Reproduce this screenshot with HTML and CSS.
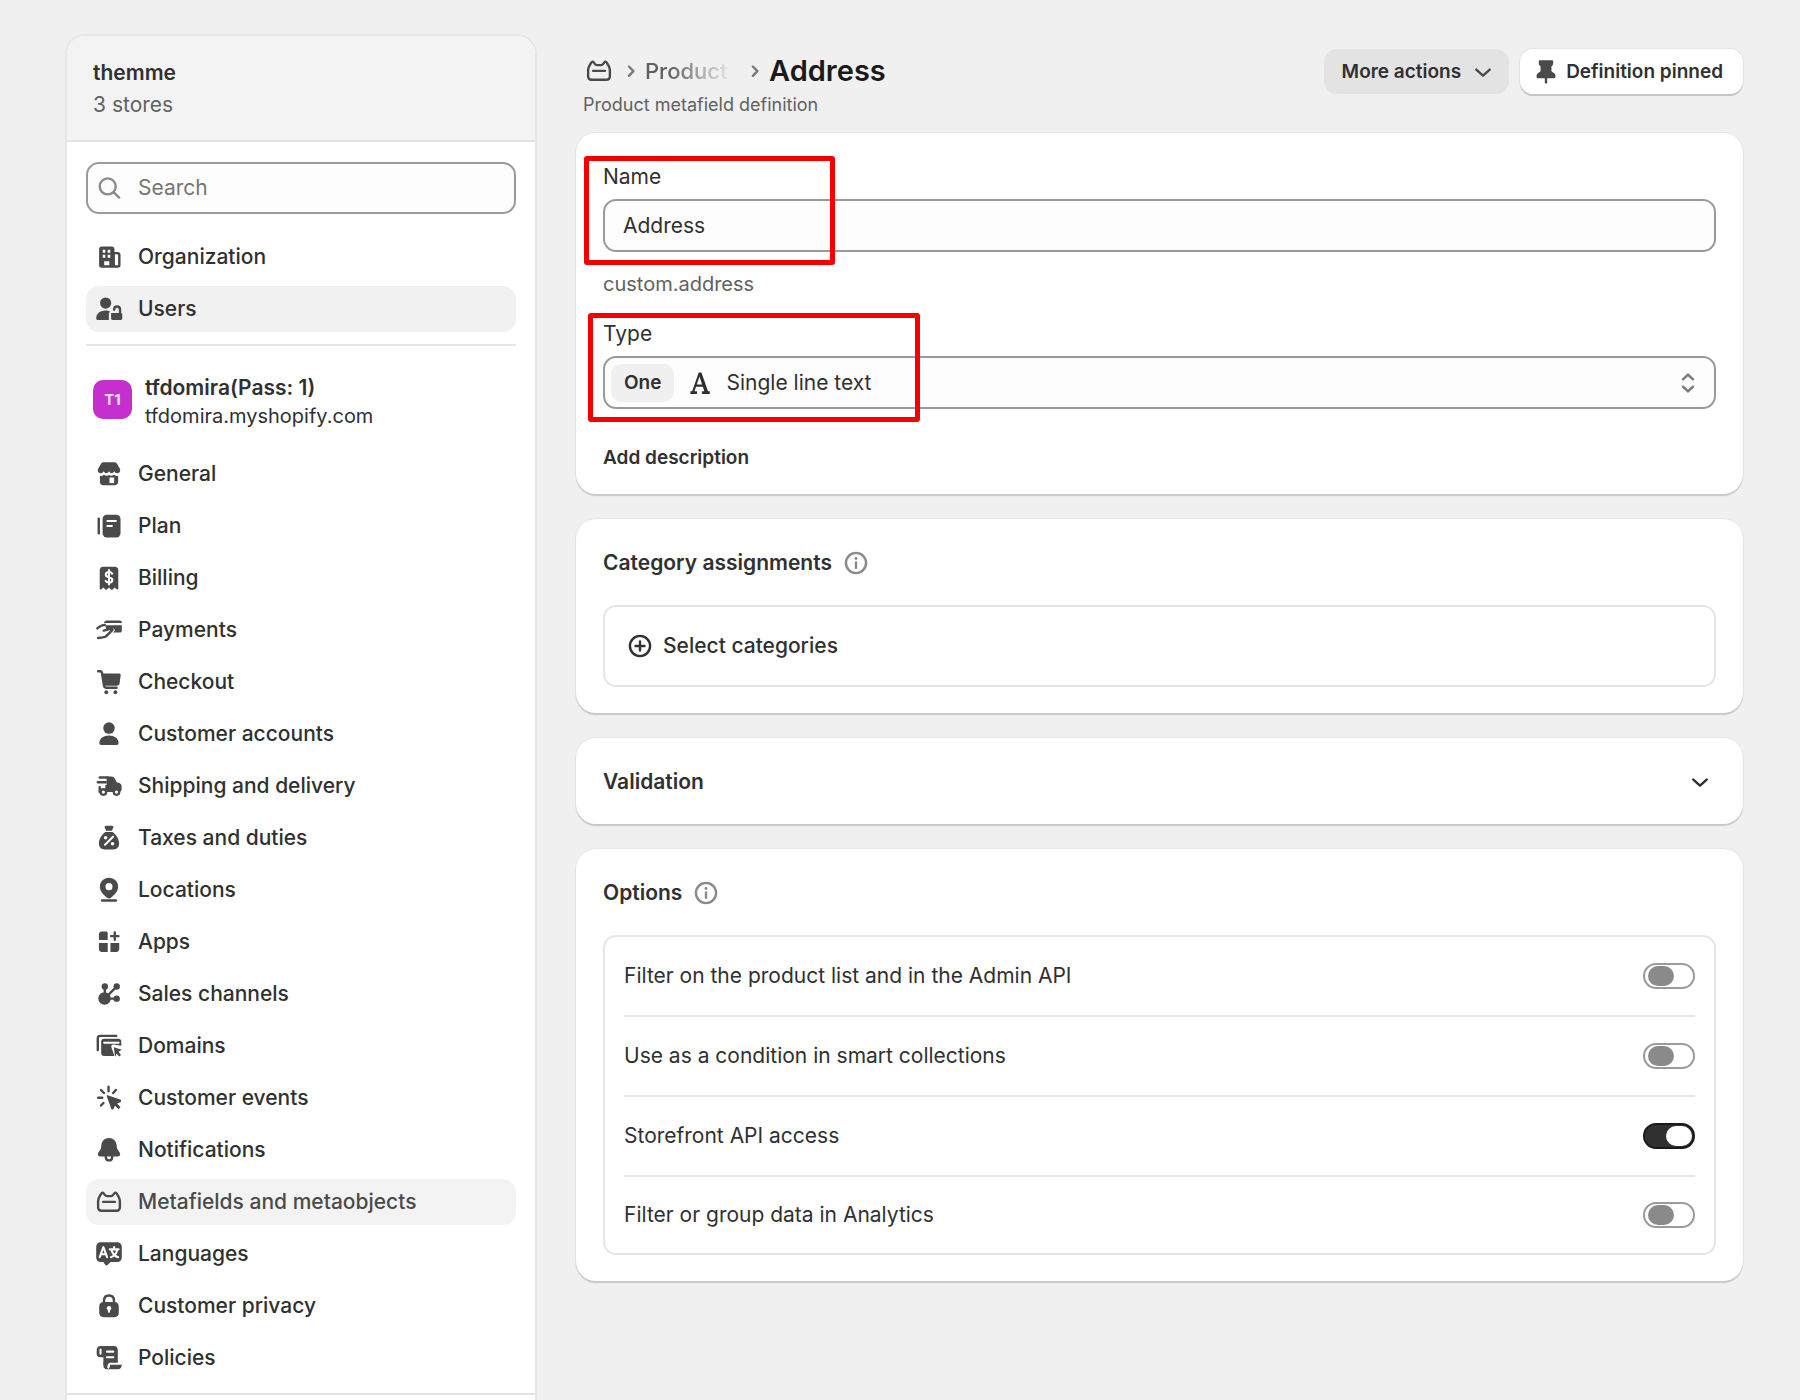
FILE: index.html
```html
<!DOCTYPE html>
<html lang="en">
<head>
    <meta charset="UTF-8">
    <meta name="viewport" content="width=device-width, initial-scale=1.0">
    <title>Address - Metafield definition</title>
    <link rel="stylesheet" href="styles.css">
</head>
<body>
    <!-- Shared icons -->
    <svg class="sprite" aria-hidden="true">
        <symbol id="icon-metafields" viewBox="0 0 20 20">
            <path class="line" d="M3.2 9.400c0-1.200.5-2.200 1.100-3.200l.9-1.500c.4-.7 1.100-.7 1.500-.1l.8 1.100c.3.400.7.600 1.200.600h2.600c.500 0 .9-.200 1.200-.600l.8-1.100c.4-.6 1.100-.6 1.500.1l.9 1.500c.6 1 1.100 2 1.100 3.200v4.100c0 1.100-.9 2-2 2h-9.600c-1.100 0-2-.9-2-2z"/>
            <path class="line" d="M6.300 9.900h7.400"/>
        </symbol>
        <symbol id="icon-info" viewBox="0 0 20 20">
            <circle class="line" cx="10" cy="10" r="6.300"/>
            <path class="line" d="M10 9.700v3.300"/>
            <circle cx="10" cy="7.200" r=".9"/>
        </symbol>
        <symbol id="icon-chevron" viewBox="0 0 20 20">
            <path class="line" d="M5.800 8.500l4.200 3.800 4.200-3.800"/>
        </symbol>
    </svg>

    <div class="layout">
        <aside class="sidebar">
            <header class="sidebar-header">
                <p class="org-name">themme</p>
                <p class="org-stores">3 stores</p>
            </header>

            <div class="sidebar-body">
                <label class="search">
                    <svg class="icon" viewBox="0 0 20 20"><circle class="line" cx="9.200" cy="9" r="5"/><path class="line" d="M13 12.700l3.300 3.300"/></svg>
                    <input type="text" placeholder="Search" aria-label="Search">
                </label>

                <nav class="nav">
                    <a class="nav-item" href="#">
                        <svg class="icon" viewBox="0 0 20 20"><path d="M5.500 3.500h6.200a1.700 1.700 0 0 1 1.700 1.700v1.600h1.800a2 2 0 0 1 2 2v6.200a1.700 1.700 0 0 1-1.700 1.700h-10a1.700 1.700 0 0 1-1.700-1.700v-9.800a1.700 1.700 0 0 1 1.700-1.700z"/><path class="cut-fill" d="M6.100 5.500h1.600v1.900h-1.600zM9.200 5.500h1.600v1.900h-1.600zM6.100 8.600h1.600v1.900h-1.600zM9.200 8.600h1.600v1.900h-1.600zM7 12.700h3.200v2.500h-3.200zM13.700 8.300h1.200a.8.8 0 0 1 .8.800v6h-2z"/></svg>
                        Organization
                    </a>
                    <a class="nav-item active" href="#">
                        <svg class="icon" viewBox="0 0 20 20"><circle cx="7.900" cy="6.300" r="3.500"/><path d="M2 16c0-3.200 2.600-5 5.900-5 1 0 2 .200 2.700.600-.5.500-.7 1.200-.7 1.900v3.400h-7c-.6 0-.9-.4-.9-.9z"/><path d="M11.300 12.500h6.100c.5 0 .9.4.9.9v2.600c0 .5-.4.9-.9.9h-5.200c-.5 0-.9-.4-.9-.9z"/><path class="line" d="M13.200 10.400c0-1.200.7-2 1.800-2s1.900.8 1.900 2v2.300"/></svg>
                        Users
                    </a>
                </nav>

                <div class="store">
                    <span class="avatar">T1</span>
                    <div>
                        <p class="store-name">tfdomira(Pass: 1)</p>
                        <p class="store-url">tfdomira.myshopify.com</p>
                    </div>
                </div>

                <nav class="nav">
                    <a class="nav-item" href="#">
                        <svg class="icon" viewBox="0 0 20 20"><path d="M6.800 2.700h6.400c.8 0 1.500.4 1.900 1l1.700 3c.7 1.500-.3 2.800-1.700 2.800-.8 0-1.400-.5-1.800-1.200-.4.700-1 1.200-1.700 1.200-.6 0-1.200-.5-1.600-1.200-.4.700-1 1.200-1.600 1.200-.7 0-1.300-.5-1.700-1.200-.4.700-1 1.200-1.800 1.200-1.400 0-2.400-1.300-1.700-2.800l1.700-3c.4-.6 1.100-1 1.900-1z"/><path d="M4.300 11.200c1 .1 1.800-.2 2.600-.8.900.8 2.200.9 3.100.2.900.7 2.200.6 3.100-.2.800.6 1.600.9 2.600.8v3.700c0 1.300-.9 2.200-2.200 2.200h-7c-1.300 0-2.200-.9-2.200-2.200z"/><path class="cut-fill" d="M10.300 12.200h2.900v3.500h-2.900z"/></svg>
                        General
                    </a>
                    <a class="nav-item" href="#">
                        <svg class="icon" viewBox="0 0 20 20"><path class="line" d="M3.600 5.500v9"/><rect x="6" y="3" width="11.200" height="14.200" rx="2.600"/><path class="cut" d="M9 6.900h5.300M9 10h2.800"/></svg>
                        Plan
                    </a>
                    <a class="nav-item" href="#">
                        <svg class="icon" viewBox="0 0 20 20"><path d="M6.200 3h7.600c1.100 0 2 .9 2 2v11.500c0 .6-.7.900-1.100.5l-1.100-1-1.400 1.200c-.3.200-.6.200-.9 0l-1.300-1.200-1.300 1.200c-.3.200-.6.200-.9 0l-1.400-1.200-1.100 1c-.4.400-1.100.1-1.100-.5v-11.500c0-1.100.9-2 2-2z"/><path class="cut" d="M12 7.300c-.3-.6-1-1-2-1-1.200 0-2 .6-2 1.600 0 2.200 4.100 1 4.100 3.300 0 1-.9 1.600-2.100 1.600-1 0-1.800-.4-2.100-1M10 5v9"/></svg>
                        Billing
                    </a>
                    <a class="nav-item" href="#">
                        <svg class="icon" viewBox="0 0 20 20"><path d="M8.500 4h8.300c.7 0 1.200.5 1.200 1.100v.6h-11.200c.3-1 .8-1.700 1.700-1.700zM7.500 7h10.500v3.400c0 .7-.5 1.200-1.200 1.200h-4.500l1-.7c.7-1-.1-2.200-1.300-1.900l-3.500.9z"/><path class="line" d="M2.700 9c1.300-1.100 2.500-2.200 4.600-2.200M6.700 10.400l4.800-1.300c.8 0 .9.800.4 1.200l-3.500 3.400c-1 1-3.400 1.200-5.200 1.300"/></svg>
                        Payments
                    </a>
                    <a class="nav-item" href="#">
                        <svg class="icon" viewBox="0 0 20 20"><path class="line" d="M3.200 3.300h1.300c.6 0 1 .4 1.100.9l1.300 8.100c.1.800.7 1.300 1.500 1.300h6.300"/><path d="M5.200 4.700h11.200c.6 0 1 .5.900 1.100l-.7 5.200c-.1.800-.8 1.400-1.600 1.400h-8.600z"/><circle cx="8.300" cy="16.400" r="1.200"/><circle cx="14" cy="16.400" r="1.200"/></svg>
                        Checkout
                    </a>
                    <a class="nav-item" href="#">
                        <svg class="icon" viewBox="0 0 20 20"><circle cx="10" cy="6.300" r="3.600"/><path d="M4 15.700c0-2.900 2.600-4.700 6-4.700s6 1.800 6 4.700c0 .8-.5 1.200-1.200 1.200h-9.600c-.7 0-1.200-.4-1.200-1.200z"/></svg>
                        Customer accounts
                    </a>
                    <a class="nav-item" href="#">
                        <svg class="icon" viewBox="0 0 20 20"><path d="M8.500 4h2.900c1 0 1.900.5 2.300 1.400l1.100 2.200 1.600.6c.9.300 1.500 1.100 1.500 2.100v1.700c0 1-.8 1.800-1.700 1.800h-11v-2.200h2.500v-2.200h.8z"/><path class="line" d="M4.200 4.700h5M3 7.700h5M4.200 10.700v3"/><path class="cut" d="M4.200 9.400h2.800"/><circle class="ring" cx="6.500" cy="13.800" r="1.700"/><circle class="ring" cx="14.700" cy="13.800" r="1.700"/></svg>
                        Shipping and delivery
                    </a>
                    <a class="nav-item" href="#">
                        <svg class="icon" viewBox="0 0 20 20"><path d="M8.200 2.300h3.600c.7 0 1.200.6.900 1.200l-.9 1.900h-3.600l-.9-1.900c-.3-.6.200-1.200.9-1.200zM7.700 6.200h4.600c2.400 1.800 4 4.500 4 7.300 0 2.300-1.300 3.700-3.600 3.700h-5.400c-2.300 0-3.600-1.400-3.600-3.700 0-2.800 1.600-5.500 4-7.300z"/><path class="cut" d="M12.500 9.200l-5 5"/><circle class="cut-fill" cx="7.900" cy="9.900" r="1.100"/><circle class="cut-fill" cx="12.200" cy="13.600" r="1.100"/></svg>
                        Taxes and duties
                    </a>
                    <a class="nav-item" href="#">
                        <svg class="icon" viewBox="0 0 20 20"><path fill-rule="evenodd" d="M10 2.400c3.100 0 5.700 2.400 5.700 5.400 0 2.900-2 5-4.500 7.100-.7.600-1.700.6-2.400 0-2.500-2.100-4.500-4.200-4.500-7.100 0-3 2.600-5.400 5.700-5.400zm0 3.300a2.200 2.200 0 1 0 0 4.400 2.200 2.200 0 0 0 0-4.400z"/><path class="line" d="M5.700 16.600h8.600"/></svg>
                        Locations
                    </a>
                    <a class="nav-item" href="#">
                        <svg class="icon" viewBox="0 0 20 20"><path d="M5.500 3.500h2.700c.6 0 1 .4 1 1v4.300h-5.500v-3.500c0-1 .8-1.800 1.800-1.800z"/><path d="M3.700 10.700h5.500v5.500h-3.700c-1 0-1.800-.8-1.800-1.800zM10.900 10.700h5.500v3.700c0 1-.8 1.800-1.800 1.800h-3.700z"/><path class="line" d="M13.600 4v4.600M11.300 6.300h4.600"/></svg>
                        Apps
                    </a>
                    <a class="nav-item" href="#">
                        <svg class="icon" viewBox="0 0 20 20"><circle cx="7.200" cy="12.800" r="3.900"/><circle cx="7.400" cy="5.300" r="2"/><circle cx="14.800" cy="5.300" r="2"/><circle cx="14.800" cy="12.900" r="2"/><path class="line" d="M7.400 5.500v5M14.600 5.500l-5 5M10 12.900h4.500"/></svg>
                        Sales channels
                    </a>
                    <a class="nav-item" href="#">
                        <svg class="icon" viewBox="0 0 20 20"><path class="line" d="M14.500 3.700h-10c-.9 0-1.500.6-1.500 1.500v7.300"/><path d="M6.800 5.500h9.200c.9 0 1.700.8 1.700 1.700v2.600l-4.800-.7c-1-.1-1.700.8-1.400 1.700l1.900 5.500h-6.600c-.9 0-1.700-.8-1.700-1.700v-7.400c0-.9.8-1.700 1.700-1.700z"/><path class="cut" d="M7 8h9"/><path d="M13 10.800l5 1.600-2 1.200 1.500 2-1.100 1-1.700-1.700-.9 1.800z"/></svg>
                        Domains
                    </a>
                    <a class="nav-item" href="#">
                        <svg class="icon" viewBox="0 0 20 20"><path class="line" d="M9.700 3v2.800M5 5l1.800 1.900M3.200 9.800h2.600M5 14.700l1.500-1.600M14.300 5l-1.700 1.900"/><path d="M9.200 8.300l7.800 2.700c.8.300.8 1.300.1 1.600l-2 .9 2.100 2.300-1.200 1.200-2.300-2.200-.8 1.900c-.3.700-1.300.7-1.500 0l-2.800-7.800c-.2-.400.200-.8.600-.6z"/></svg>
                        Customer events
                    </a>
                    <a class="nav-item" href="#">
                        <svg class="icon" viewBox="0 0 20 20"><path d="M10 2.500c2.700 0 4.500 1.900 4.800 4.500l.2 2 1.700 2.700c.7 1.200.2 2.300-1.200 2.300h-11c-1.400 0-1.900-1.100-1.200-2.300l1.700-2.700.2-2c.3-2.600 2.100-4.500 4.800-4.500z"/><path class="line" d="M8 14.300c0 1.200.8 2.200 2 2.200s2-1 2-2.200"/></svg>
                        Notifications
                    </a>
                    <a class="nav-item current" href="#">
                        <svg class="icon"><use href="#icon-metafields"/></svg>
                        Metafields and metaobjects
                    </a>
                    <a class="nav-item" href="#">
                        <svg class="icon" viewBox="0 0 20 20"><path d="M4.800 2.700h10.400c1.600 0 2.800 1.200 2.800 2.800v6.700c0 1.600-1.200 2.800-2.800 2.800h-4.200l-1.900 1.900c-.4.400-1 .4-1.400 0l-1.200-1.900h-1.700c-1.600 0-2.800-1.200-2.800-2.800v-6.700c0-1.600 1.200-2.800 2.800-2.800z"/><path class="cut" d="M4.200 12l2.300-6.300 2.300 6.300M5 10.200h3M10.500 7.100h5.500M13.200 5.700v1.400M11.200 12c2.400-.8 3.600-2.600 3.900-4.700M11.600 7.700c.7 2.200 2 3.600 4.100 4.300"/></svg>
                        Languages
                    </a>
                    <a class="nav-item" href="#">
                        <svg class="icon" viewBox="0 0 20 20"><path class="line" d="M6.900 8v-1.300c0-2 1.200-3.300 3.100-3.300s3.100 1.300 3.100 3.300v1.300"/><path d="M6.500 7.500h7c1.500 0 2.600 1.100 2.600 2.600v4.300c0 1.500-1.100 2.600-2.600 2.600h-7c-1.500 0-2.600-1.100-2.600-2.600v-4.300c0-1.500 1.100-2.600 2.600-2.600z"/><circle class="cut-fill" cx="10" cy="11.400" r="1.400"/><path class="cut" d="M10 11.800v1.800"/></svg>
                        Customer privacy
                    </a>
                    <a class="nav-item" href="#">
                        <svg class="icon" viewBox="0 0 20 20"><path d="M4.600 2.500h8.500c1.400 0 2.400 1 2.400 2.400v8.100h-4.500c-1.300 0-1.900 1-2 2.500l-2.500-1.500v-4.500h-2.200c-1.300 0-2-.8-2-2v-2.400c0-1.500.9-2.600 2.300-2.600z"/><path class="cut" d="M4.700 4.700v2.600M8.700 6h4M8.700 9.500h4"/><path d="M10.600 14.200h7.400c0 1.600-.9 2.800-2.500 2.800h-6.500c1 0 1.600-1 1.600-2.800zM6.500 12.500v2.500c0 1.100.9 2 2 2h1.300c-.8-.4-1-1.300-1-2.500z"/></svg>
                        Policies
                    </a>
                </nav>
            </div>
            <footer class="sidebar-footer"></footer>
        </aside>

        <main class="main">
            <header class="page-header">
                <div>
                    <div class="breadcrumb">
                        <a class="crumb-icon" href="#" aria-label="Metafields and metaobjects"><svg class="icon"><use href="#icon-metafields"/></svg></a>
                        <svg class="crumb-sep" viewBox="0 0 10 20"><path class="line" d="M3.700 7.200l2.800 2.900-2.800 2.900"/></svg>
                        <a class="crumb" href="#">Product</a>
                        <svg class="crumb-sep" viewBox="0 0 10 20"><path class="line" d="M3.700 7.200l2.800 2.900-2.800 2.900"/></svg>
                        <h1>Address</h1>
                    </div>
                    <p class="subtitle">Product metafield definition</p>
                </div>
                <div class="actions">
                    <button class="btn btn-secondary" type="button">More actions <svg class="icon"><use href="#icon-chevron"/></svg></button>
                    <button class="btn btn-pinned" type="button"><svg class="icon" viewBox="0 0 20 20"><path d="M6.300 2.700h7.400c.5 0 .8.3.8.8v1.100c0 .8-.4 1.500-1.100 1.900v3.100l1.700 1.200c.5.400.8.900.8 1.500v.6c0 .6-.4 1-1 1h-9.800c-.6 0-1-.4-1-1v-.6c0-.6.3-1.100.8-1.500l1.700-1.200v-3.100c-.7-.4-1.100-1.100-1.100-1.900v-1.100c0-.5.3-.8.8-.8z"/><path class="line" d="M10 13v3.500"/></svg>Definition pinned</button>
                </div>
            </header>

            <section class="card card-details">
                <div class="field">
                    <label for="name">Name</label>
                    <input class="control" type="text" id="name" value="Address">
                    <span class="highlight highlight-name"></span>
                </div>
                <p class="help">custom.address</p>
                <div class="field">
                    <label for="type">Type</label>
                    <div class="control select">
                        <span class="tag">One</span>
                        <svg class="icon type-icon" viewBox="0 0 20 20"><path d="M9.200 3.500h1.700l4.100 11.700h1.100v1.600h-4.900v-1.600h1.500l-.9-2.800h-4.300l-.9 2.800h1.500v1.600h-4.100v-1.600h1.100zM9.700 5.900l-1.700 5h3.300z"/></svg>
                        <select id="type">
                            <option>Single line text</option>
                        </select>
                        <svg class="icon select-arrows" viewBox="0 0 20 20"><path class="line" d="M6.900 7.700l3.100-3 3.100 3M6.900 12.300l3.100 3 3.100-3"/></svg>
                    </div>
                    <span class="highlight highlight-type"></span>
                </div>
                <button class="link-btn" type="button">Add description</button>
            </section>

            <section class="card">
                <h2>Category assignments <svg class="icon info"><use href="#icon-info"/></svg></h2>
                <div class="box">
                    <button class="select-categories" type="button">
                        <svg class="icon" viewBox="0 0 20 20"><circle class="line" cx="10" cy="10" r="6.300"/><path class="line" d="M10 7.200v5.600M7.200 10h5.600"/></svg>
                        Select categories
                    </button>
                </div>
            </section>

            <section class="card">
                <button class="accordion" type="button">Validation <svg class="icon"><use href="#icon-chevron"/></svg></button>
            </section>

            <section class="card">
                <h2>Options <svg class="icon info"><use href="#icon-info"/></svg></h2>
                <div class="box options">
                    <label class="option">Filter on the product list and in the Admin API <input type="checkbox"></label>
                    <label class="option">Use as a condition in smart collections <input type="checkbox"></label>
                    <label class="option">Storefront API access <input type="checkbox" checked></label>
                    <label class="option">Filter or group data in Analytics <input type="checkbox"></label>
                </div>
            </section>
        </main>
    </div>
</body>
</html>
```

FILE: styles.css
```css
* {
    box-sizing: border-box;
}
body {
    margin: 0;
    background-color: #f0f0f0;
    color: #303030;
    font-family: Inter, "Liberation Sans", sans-serif;
    font-size: 21px;
    line-height: 32px;
}
p, h1, h2 {
    margin: 0;
}
a {
    color: inherit;
    text-decoration: none;
}
button, input, select {
    font: inherit;
    color: inherit;
}
button {
    padding: 0;
    border: none;
    background: none;
    cursor: pointer;
}

/* Icons */
.sprite {
    display: none;
}
.icon {
    width: 32px;
    height: 32px;
    flex-shrink: 0;
    fill: currentColor;
}
.line {
    fill: none;
    stroke: currentColor;
    stroke-width: 1.5;
    stroke-linecap: round;
    stroke-linejoin: round;
}
.cut {
    fill: none;
    stroke: #fff;
    stroke-width: 1.3;
    stroke-linecap: round;
    stroke-linejoin: round;
}
.cut-fill {
    fill: #fff;
}
.ring {
    fill: #fff;
    stroke: currentColor;
    stroke-width: 1.4;
}

/* Layout */
.layout {
    display: flex;
    gap: 39px;
    min-height: 100vh;
    padding: 34px 57px 0 65px;
}
.sidebar {
    display: flex;
    flex-direction: column;
    flex: 0 0 472px;
    border: 2px solid #e6e6e6;
    border-bottom: none;
    border-radius: 20px 20px 0 0;
    background-color: #fff;
}
.main {
    display: flex;
    flex-direction: column;
    gap: 25px;
    flex: 1;
    min-width: 0;
}

/* Sidebar */
.sidebar-header {
    padding: 21px 26px 19px;
    border-bottom: 2px solid #e3e3e3;
    border-radius: 18px 18px 0 0;
    background-color: #f3f3f3;
}
.org-name {
    font-weight: 600;
}
.sidebar-body {
    padding: 20px 19px 12px;
}
.org-stores {
    color: #616161;
}
.search {
    display: flex;
    align-items: center;
    gap: 13px;
    height: 52px;
    margin-bottom: 20px;
    padding: 0 5px;
    border: 2px solid #9a9a9a;
    border-radius: 13px;
    background-color: #fdfdfd;
    color: #8a8a8a;
}
.search input {
    flex: 1;
    min-width: 0;
    padding: 0;
    border: none;
    outline: none;
    background: none;
}
.search input::placeholder {
    color: #757575;
    opacity: 1;
}
.nav {
    display: flex;
    flex-direction: column;
    gap: 6px;
}
.nav-item {
    display: flex;
    align-items: center;
    gap: 13px;
    height: 46px;
    padding: 0 7px;
    border-radius: 13px;
    font-weight: 500;
}
.nav-item .icon {
    color: #4a4a4a;
}
.nav-item.active {
    background-color: #f1f1f1;
}
.nav-item.current {
    background-color: #f3f3f3;
    color: #4a4a4a;
}
.store {
    display: flex;
    align-items: flex-start;
    gap: 13px;
    margin-top: 12px;
    margin-bottom: 15px;
    padding: 28px 7px 6px;
    border-top: 2px solid #e6e6e6;
    line-height: 28px;
}
.avatar {
    width: 39px;
    height: 39px;
    margin-top: 6px;
    border-radius: 10px;
    background-color: #c52fce;
    color: #fbe4fc;
    font-size: 15px;
    font-weight: 700;
    line-height: 40px;
    text-align: center;
}
.store-name {
    font-weight: 600;
}
.store-url {
    font-size: 20px;
}
.sidebar-footer {
    flex: 1;
    border-top: 2px solid #e3e3e3;
}

/* Page header */
.page-header {
    display: flex;
    justify-content: space-between;
    align-items: flex-start;
    margin-bottom: -9px;
    padding: 15px 0 0 7px;
}
.breadcrumb {
    display: flex;
    align-items: center;
    height: 44px;
}
.crumb-icon {
    display: flex;
    color: #4a4a4a;
}
.crumb-sep {
    width: 16px;
    height: 32px;
    margin: 0 6px 0 8px;
    color: #7a7a7a;
}
.crumb {
    width: 94px;
    overflow: hidden;
    color: #616161;
    font-size: 22px;
    font-weight: 500;
    mask-image: linear-gradient(to right, #000 25%, transparent 95%);
}
h1 {
    color: #1a1a1a;
    font-size: 29px;
    font-weight: 600;
}
.subtitle {
    color: #616161;
    font-size: 18px;
    line-height: 24px;
}
.actions {
    display: flex;
    gap: 11px;
}
.btn {
    display: flex;
    align-items: center;
    height: 45px;
    border-radius: 13px;
    font-size: 19px;
    font-weight: 600;
}
.btn .icon {
    color: #4a4a4a;
}
.btn-secondary {
    gap: 6px;
    padding: 0 10px 0 18px;
    background-color: #e3e3e3;
}
.btn-pinned {
    gap: 4px;
    padding: 0 20px 0 10px;
    background-color: #fff;
    box-shadow: 0 2px 0 #c4c4c4, 0 0 0 1px #e3e3e3;
}

/* Cards */
.card {
    padding: 28px 27px 26px;
    border-radius: 20px;
    background-color: #fff;
    box-shadow: 0 2px 1px #c8c8c8, 0 0 0 1px #e6e6e6;
}
.card-details {
    padding-bottom: 20px;
}
h2 {
    display: flex;
    align-items: center;
    gap: 8px;
    margin-bottom: 26px;
    font-size: 21px;
    font-weight: 600;
}
.info {
    color: #8a8a8a;
}
.field {
    position: relative;
}
.field label {
    display: block;
    margin-bottom: 6px;
}
.control {
    display: flex;
    align-items: center;
    width: 100%;
    height: 53px;
    padding: 0 18px;
    border: 2px solid #9a9a9a;
    border-radius: 13px;
    background-color: #fdfdfd;
}
.select {
    padding: 0 10px 0 6px;
}
.select select {
    flex: 1;
    padding: 0;
    border: none;
    outline: none;
    background: none;
    appearance: none;
}
.tag {
    padding: 3px 13px;
    border-radius: 10px;
    background-color: #f0f0f0;
    font-size: 19px;
    font-weight: 600;
}
.type-icon {
    margin: 0 10px;
}
.select-arrows {
    color: #7a7a7a;
}
.help {
    margin: 16px 0 18px;
    color: #616161;
    font-size: 20px;
}
.link-btn {
    margin-top: 33px;
    font-size: 19px;
    font-weight: 600;
}

/* Red marker frames over the fields */
.highlight {
    position: absolute;
    border: 5px solid #f50000;
    border-radius: 3px;
    pointer-events: none;
}
.highlight-name {
    top: -5px;
    left: -19px;
    width: 251px;
    height: 109px;
}
.highlight-type {
    top: -5px;
    left: -15px;
    width: 332px;
    height: 109px;
}

.box {
    border: 2px solid #e6e6e6;
    border-radius: 13px;
}
.select-categories {
    display: flex;
    align-items: center;
    gap: 7px;
    padding: 23px 19px;
    font-weight: 500;
}
.accordion {
    display: flex;
    justify-content: space-between;
    align-items: center;
    width: 100%;
    font-weight: 600;
}
.options {
    padding: 0 19px;
}
.option {
    display: flex;
    justify-content: space-between;
    align-items: center;
    height: 80px;
}
.option:first-child,
.option:last-child {
    height: 78px;
}
.option + .option {
    border-top: 2px solid #e6e6e6;
}

/* Toggle switch */
.option input {
    display: flex;
    align-items: center;
    width: 52px;
    height: 26px;
    margin: 0;
    padding: 0 3px;
    border: 2px solid #9a9a9a;
    border-radius: 13px;
    background-color: #fff;
    appearance: none;
}
.option input::before {
    content: "";
    width: 26px;
    height: 20px;
    border-radius: 10px;
    background-color: #8a8a8a;
}
.option input:checked {
    justify-content: flex-end;
    padding: 0 1px;
    border-color: #1a1a1a;
    background-color: #303030;
}
.option input:checked::before {
    background-color: #fff;
}
```
